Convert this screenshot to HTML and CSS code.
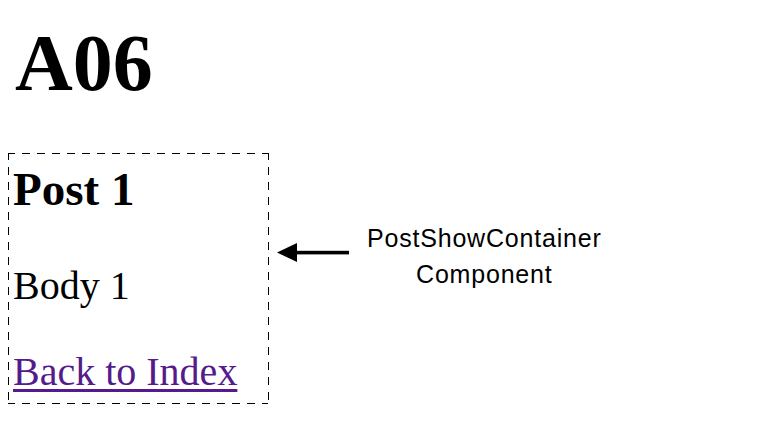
FILE: index.html
```html
<!DOCTYPE html>
<html lang="en">
<head>
    <meta charset="UTF-8">
    <meta name="viewport" content="width=device-width, initial-scale=1.0">
    <title>A06</title>
    <link rel="stylesheet" href="styles.css">
</head>
<body>
    <h1 class="title">A06</h1>

    <div class="content">
        <div class="post-box">
            <h3>Post 1</h3>
            <p>Body 1</p>
            <p><a href="#">Back to Index</a></p>
        </div>

        <div class="note">
            <svg class="arrow" width="72" height="20" viewBox="0 0 72 20">
                <polygon points="0,9.5 20,0 20,19" fill="#000"/>
                <rect x="19" y="7.8" width="53" height="3.6" fill="#000"/>
            </svg>
            <div class="label">PostShowContainer<br>Component</div>
        </div>
    </div>
</body>
</html>
```

FILE: styles.css
```css
body {
    font-family: "Liberation Serif", "Times New Roman", serif;
    background-color: #fff;
    color: #000;
    margin: 0;
    padding: 0;
}
.title {
    font-size: 80px;
    line-height: 92px;
    font-weight: bold;
    margin: 17px 0 44px 15px;
}
.content {
    display: flex;
    align-items: flex-start;
}
.post-box {
    box-sizing: border-box;
    width: 261px;
    height: 251px;
    margin-left: 8px;
    padding: 9px 5px;
    /* dashed outline, long dashes like the reference */
    background-image:
        repeating-linear-gradient(to right, #000 0 8px, transparent 8px 15px),
        repeating-linear-gradient(to right, #000 0 8px, transparent 8px 15px),
        repeating-linear-gradient(to bottom, #000 0 8px, transparent 8px 15px),
        repeating-linear-gradient(to bottom, #000 0 8px, transparent 8px 15px);
    background-size: 100% 1px, 100% 1px, 1px 100%, 1px 100%;
    background-position: -1px 0, -1px 100%, 0 -1px, 100% -1px;
    background-repeat: no-repeat;
}
.post-box h3 {
    font-size: 47px;
    line-height: 54px;
    font-weight: bold;
    margin: 0 0 47px;
}
.post-box p {
    font-size: 40px;
    line-height: 46px;
    margin: 0 0 40px;
}
.post-box p:last-child {
    margin-bottom: 0;
}
.post-box a {
    color: #551a8b;
    text-decoration: underline;
    text-decoration-thickness: 3px;
    text-underline-offset: 4px;
}
.note {
    display: flex;
    align-items: flex-start;
    margin-left: 8px;
}
.arrow {
    display: block;
    margin-top: 90px;
}
.label {
    margin-top: 67px;
    margin-left: 18px;
    font-family: "Liberation Sans", Arial, sans-serif;
    font-size: 25px;
    line-height: 36px;
    letter-spacing: 0.8px;
    text-align: center;
}
```
